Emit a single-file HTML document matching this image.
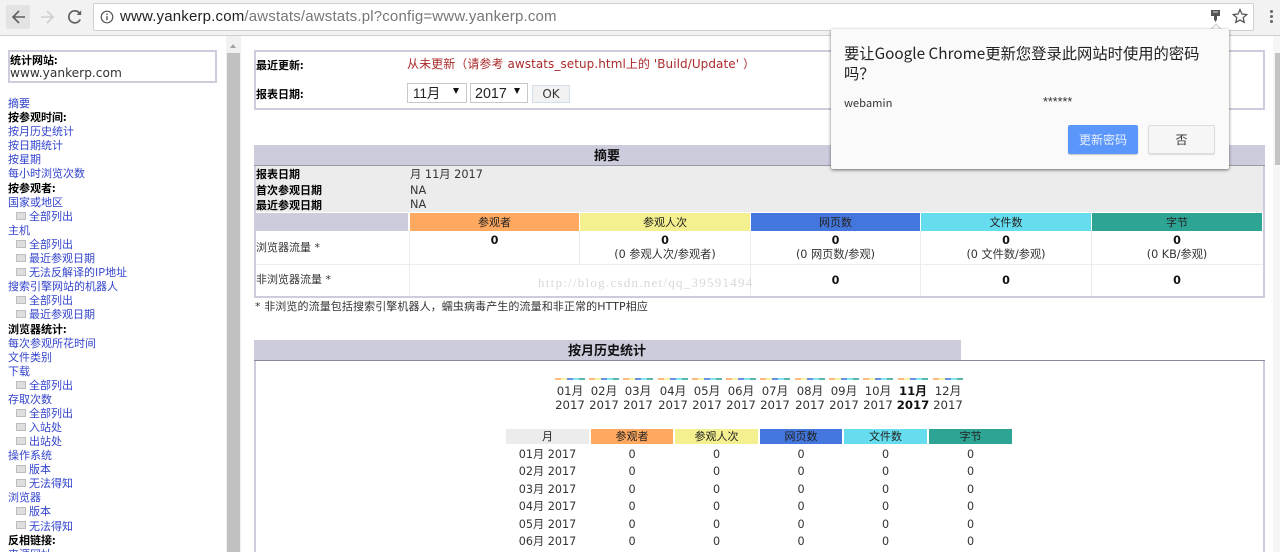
<!DOCTYPE html>
<html lang="zh"><head><meta charset="utf-8"><title>AWStats</title>
<style>
html,body{margin:0;padding:0;background:#fff;overflow:hidden}
#p{position:relative;width:1280px;height:552px;overflow:hidden;filter:blur(.35px);font:11px/14px "DejaVu Sans","Noto Sans CJK SC",sans-serif;color:#222}
#p div,#p a,#p b,#p svg{position:absolute;white-space:nowrap}
#p span{white-space:nowrap}
a{color:#3344cc;text-decoration:none}
.l{left:8px;font-family:"Noto Sans CJK SC",sans-serif;font-size:11px;line-height:14px}
.s{left:29px;font-family:"Noto Sans CJK SC",sans-serif;font-size:11px;line-height:14px}
.i{left:16px;width:8px;height:6px;background:#dedede;border:1px solid #bdbdbd}
.h{color:#000;font-weight:700;font-family:"Noto Sans CJK SC",sans-serif;font-size:11px;line-height:14px}
.c{text-align:center;font-family:"DejaVu Sans","Noto Sans CJK SC",sans-serif;font-size:11.2px;line-height:14px;color:#333}
.t{font-family:"Noto Sans CJK SC",sans-serif;font-size:11px;line-height:16px;text-align:center;color:#222}
.m{width:40px;text-align:center;font-size:11.7px;line-height:14.4px;color:#333}
.b{width:30px;height:2px;top:378px;opacity:.8;background:linear-gradient(90deg,#ffa860 0 20%,#f4f090 20% 40%,#4477dd 40% 60%,#66ddee 60% 80%,#2ea495 80%)}
</style></head><body><div id="p">

<!-- content frame: sidebar -->
<div style="left:8px;top:50px;width:205px;height:29px;border:2px solid #ccd"></div>
<div class="h" style="left:10px;top:53px">统计网站:</div>
<div style="left:10px;top:66px;font-size:12.2px;color:#333">www.yankerp.com</div>

<a class="l" style="top:96px">摘要</a>
<div class="h" style="left:8px;top:110px">按参观时间:</div>
<a class="l" style="top:124px">按月历史统计</a>
<a class="l" style="top:138px">按日期统计</a>
<a class="l" style="top:152px">按星期</a>
<a class="l" style="top:166px">每小时浏览次数</a>
<div class="h" style="left:8px;top:181px">按参观者:</div>
<a class="l" style="top:195px">国家或地区</a>
<div class="i" style="top:212px"></div><a class="s" style="top:209px">全部列出</a>
<a class="l" style="top:223px">主机</a>
<div class="i" style="top:240px"></div><a class="s" style="top:237px">全部列出</a>
<div class="i" style="top:254px"></div><a class="s" style="top:251px">最近参观日期</a>
<div class="i" style="top:268px"></div><a class="s" style="top:265px">无法反解译的IP地址</a>
<a class="l" style="top:279px">搜索引擎网站的机器人</a>
<div class="i" style="top:296px"></div><a class="s" style="top:293px">全部列出</a>
<div class="i" style="top:310px"></div><a class="s" style="top:307px">最近参观日期</a>
<div class="h" style="left:8px;top:322px">浏览器统计:</div>
<a class="l" style="top:336px">每次参观所花时间</a>
<a class="l" style="top:350px">文件类别</a>
<a class="l" style="top:364px">下载</a>
<div class="i" style="top:381px"></div><a class="s" style="top:378px">全部列出</a>
<a class="l" style="top:392px">存取次数</a>
<div class="i" style="top:409px"></div><a class="s" style="top:406px">全部列出</a>
<div class="i" style="top:423px"></div><a class="s" style="top:420px">入站处</a>
<div class="i" style="top:437px"></div><a class="s" style="top:434px">出站处</a>
<a class="l" style="top:448px">操作系统</a>
<div class="i" style="top:465px"></div><a class="s" style="top:462px">版本</a>
<div class="i" style="top:479px"></div><a class="s" style="top:476px">无法得知</a>
<a class="l" style="top:490px">浏览器</a>
<div class="i" style="top:507px"></div><a class="s" style="top:504px">版本</a>
<div class="i" style="top:521px"></div><a class="s" style="top:519px">无法得知</a>
<div class="h" style="left:8px;top:533px">反相链接:</div>
<a class="l" style="top:547px">来源网址</a>

<!-- sidebar scrollbar -->
<div style="left:226px;top:36px;width:15px;height:516px;background:#f1f1f1"></div>
<div style="left:227px;top:53px;width:13px;height:499px;background:#c1c1c1"></div>
<div style="left:230px;top:44px;width:0;height:0;border-left:3.5px solid transparent;border-right:3.5px solid transparent;border-bottom:4px solid #a3a3a3"></div>

<!-- top box -->
<div style="left:254px;top:50px;width:1007px;height:56px;border:2px solid #ccd"></div>
<div class="h" style="left:256px;top:58px">最近更新:</div>
<div class="h" style="left:256px;top:87px">报表日期:</div>
<div style="left:407px;top:57px;color:#aa2a2a;font-size:12px;letter-spacing:.07px">从未更新（请参考 awstats_setup.html上的 'Build/Update' ）</div>
<div style="left:407px;top:83px;width:58px;height:18px;border:1px solid #c8c8c8;background:#fff"></div>
<div style="left:413px;top:87px;font-size:13.4px;color:#222;font-family:'Liberation Sans','Noto Sans CJK SC',sans-serif">11月</div>
<div style="left:453px;top:88px;width:0;height:0;border-left:3.5px solid transparent;border-right:3.5px solid transparent;border-top:6px solid #111"></div>
<div style="left:470px;top:83px;width:56px;height:18px;border:1px solid #c8c8c8;background:#fff"></div>
<div style="left:475px;top:87px;font-size:14.3px;color:#222;font-family:'Liberation Sans','Noto Sans CJK SC',sans-serif">2017</div>
<div style="left:514px;top:88px;width:0;height:0;border-left:3.5px solid transparent;border-right:3.5px solid transparent;border-top:6px solid #111"></div>
<div style="left:532px;top:85px;width:36px;height:16px;border:1px solid #d4deea;background:#f2f2f2;text-align:center;line-height:16px;font-size:12px;color:#333;font-family:'DejaVu Sans',sans-serif">OK</div>

<!-- summary -->
<div style="left:254px;top:145px;width:1011px;height:20px;background:#ccd"></div>
<div style="left:254px;top:165px;width:1011px;height:1px;background:#9a9aa6"></div>
<div style="left:577px;top:147px;width:60px;text-align:center;font:700 13px/16px 'Noto Sans CJK SC',sans-serif;color:#111">摘要</div>
<div style="left:254px;top:166px;width:1007px;height:130px;border:2px solid #ccd;border-top:0;background:#fff"></div>
<div style="left:256px;top:166px;width:1007px;height:46px;background:#ececec"></div>
<div class="h" style="left:256px;top:167px">报表日期</div>
<div class="h" style="left:256px;top:183px">首次参观日期</div>
<div class="h" style="left:256px;top:198px">最近参观日期</div>
<div style="left:410px;top:168px;color:#333;font-size:11.3px">月 11月 2017</div>
<div style="left:410px;top:184px;color:#333;font-size:11.3px">NA</div>
<div style="left:410px;top:198px;color:#333;font-size:11.3px">NA</div>

<div style="left:256px;top:213px;width:152px;height:18px;background:#ccd"></div>
<div class="t" style="left:410px;top:213px;width:169px;height:18px;background:#ffa860;line-height:18px">参观者</div>
<div class="t" style="left:580px;top:213px;width:170px;height:18px;background:#f4f090;line-height:18px">参观人次</div>
<div class="t" style="left:751px;top:213px;width:169px;height:18px;background:#4477dd;line-height:18px">网页数</div>
<div class="t" style="left:921px;top:213px;width:170px;height:18px;background:#66ddee;line-height:18px">文件数</div>
<div class="t" style="left:1092px;top:213px;width:170px;height:18px;background:#2ea495;line-height:18px">字节</div>

<div style="left:256px;top:264px;width:1007px;height:1px;background:#ececec"></div>
<div style="left:409px;top:231px;width:1px;height:65px;background:#ececec"></div>
<div style="left:579px;top:231px;width:1px;height:33px;background:#ececec"></div>
<div style="left:750px;top:231px;width:1px;height:65px;background:#ececec"></div>
<div style="left:920px;top:231px;width:1px;height:65px;background:#ececec"></div>
<div style="left:1091px;top:231px;width:1px;height:65px;background:#ececec"></div>
<div style="left:256px;top:241px;font:11px/14px 'DejaVu Sans','Noto Sans CJK SC',sans-serif;color:#333">浏览器流量 *</div>
<div style="left:256px;top:273px;font:11px/14px 'DejaVu Sans','Noto Sans CJK SC',sans-serif;color:#333">非浏览器流量 *</div>

<div class="c" style="left:410px;width:169px;top:234px;font-weight:700;color:#111">0</div>
<div class="c" style="left:580px;width:170px;top:234px;font-weight:700;color:#111">0</div>
<div class="c" style="left:751px;width:169px;top:234px;font-weight:700;color:#111">0</div>
<div class="c" style="left:921px;width:170px;top:234px;font-weight:700;color:#111">0</div>
<div class="c" style="left:1092px;width:170px;top:234px;font-weight:700;color:#111">0</div>
<div class="c" style="left:580px;width:170px;top:248px">(0 参观人次/参观者)</div>
<div class="c" style="left:751px;width:169px;top:248px">(0 网页数/参观)</div>
<div class="c" style="left:921px;width:170px;top:248px">(0 文件数/参观)</div>
<div class="c" style="left:1092px;width:170px;top:248px">(0 KB/参观)</div>
<div class="c" style="left:751px;width:169px;top:274px;font-weight:700;color:#111">0</div>
<div class="c" style="left:921px;width:170px;top:274px;font-weight:700;color:#111">0</div>
<div class="c" style="left:1092px;width:170px;top:274px;font-weight:700;color:#111">0</div>
<div style="left:538px;top:276px;font:13px/14px 'Liberation Serif',serif;letter-spacing:1.25px;color:#d8d8d8">http://blog.csdn.net/qq_39591494</div>
<div style="left:255px;top:300px;font:11px/14px 'DejaVu Sans','Noto Sans CJK SC',sans-serif;letter-spacing:.1px;color:#333">* 非浏览的流量包括搜索引擎机器人，蠕虫病毒产生的流量和非正常的HTTP相应</div>

<!-- monthly -->
<div style="left:254px;top:340px;width:707px;height:20px;background:#ccd"></div>
<div style="left:254px;top:360px;width:1011px;height:1px;background:#88889a"></div>
<div style="left:547px;top:342px;width:120px;text-align:center;font:700 13px/16px 'Noto Sans CJK SC',sans-serif;color:#111">按月历史统计</div>
<div style="left:254px;top:361px;width:2px;height:191px;background:#ccd"></div>
<div style="left:1263px;top:361px;width:2px;height:191px;background:#ccd"></div>

<div class="b" style="left:555px"></div><div class="b" style="left:589px"></div><div class="b" style="left:623px"></div><div class="b" style="left:658px"></div><div class="b" style="left:692px"></div><div class="b" style="left:726px"></div><div class="b" style="left:760px"></div><div class="b" style="left:795px"></div><div class="b" style="left:829px"></div><div class="b" style="left:863px"></div><div class="b" style="left:898px"></div><div class="b" style="left:933px"></div>

<div class="m" style="left:550px;top:384px">01月<br>2017</div>
<div class="m" style="left:584px;top:384px">02月<br>2017</div>
<div class="m" style="left:618px;top:384px">03月<br>2017</div>
<div class="m" style="left:653px;top:384px">04月<br>2017</div>
<div class="m" style="left:687px;top:384px">05月<br>2017</div>
<div class="m" style="left:721px;top:384px">06月<br>2017</div>
<div class="m" style="left:755px;top:384px">07月<br>2017</div>
<div class="m" style="left:790px;top:384px">08月<br>2017</div>
<div class="m" style="left:824px;top:384px">09月<br>2017</div>
<div class="m" style="left:858px;top:384px">10月<br>2017</div>
<div class="m" style="left:893px;top:384px;font-weight:700;color:#111">11月<br>2017</div>
<div class="m" style="left:928px;top:384px">12月<br>2017</div>

<div class="t" style="left:506px;top:429px;width:83px;height:15px;line-height:15px;background:#ececec">月</div>
<div class="t" style="left:591px;top:429px;width:82px;height:15px;line-height:15px;background:#ffa860">参观者</div>
<div class="t" style="left:675px;top:429px;width:83px;height:15px;line-height:15px;background:#f4f090">参观人次</div>
<div class="t" style="left:760px;top:429px;width:82px;height:15px;line-height:15px;background:#4477dd">网页数</div>
<div class="t" style="left:844px;top:429px;width:83px;height:15px;line-height:15px;background:#66ddee">文件数</div>
<div class="t" style="left:929px;top:429px;width:83px;height:15px;line-height:15px;background:#2ea495">字节</div>

<div class="c" style="left:506px;width:83px;top:448px">01月 2017</div>
<div class="c" style="left:591px;width:82px;top:448px">0</div><div class="c" style="left:675px;width:83px;top:448px">0</div><div class="c" style="left:760px;width:82px;top:448px">0</div><div class="c" style="left:844px;width:83px;top:448px">0</div><div class="c" style="left:929px;width:83px;top:448px">0</div>
<div class="c" style="left:506px;width:83px;top:465px">02月 2017</div>
<div class="c" style="left:591px;width:82px;top:465px">0</div><div class="c" style="left:675px;width:83px;top:465px">0</div><div class="c" style="left:760px;width:82px;top:465px">0</div><div class="c" style="left:844px;width:83px;top:465px">0</div><div class="c" style="left:929px;width:83px;top:465px">0</div>
<div class="c" style="left:506px;width:83px;top:483px">03月 2017</div>
<div class="c" style="left:591px;width:82px;top:483px">0</div><div class="c" style="left:675px;width:83px;top:483px">0</div><div class="c" style="left:760px;width:82px;top:483px">0</div><div class="c" style="left:844px;width:83px;top:483px">0</div><div class="c" style="left:929px;width:83px;top:483px">0</div>
<div class="c" style="left:506px;width:83px;top:500px">04月 2017</div>
<div class="c" style="left:591px;width:82px;top:500px">0</div><div class="c" style="left:675px;width:83px;top:500px">0</div><div class="c" style="left:760px;width:82px;top:500px">0</div><div class="c" style="left:844px;width:83px;top:500px">0</div><div class="c" style="left:929px;width:83px;top:500px">0</div>
<div class="c" style="left:506px;width:83px;top:518px">05月 2017</div>
<div class="c" style="left:591px;width:82px;top:518px">0</div><div class="c" style="left:675px;width:83px;top:518px">0</div><div class="c" style="left:760px;width:82px;top:518px">0</div><div class="c" style="left:844px;width:83px;top:518px">0</div><div class="c" style="left:929px;width:83px;top:518px">0</div>
<div class="c" style="left:506px;width:83px;top:535px">06月 2017</div>
<div class="c" style="left:591px;width:82px;top:535px">0</div><div class="c" style="left:675px;width:83px;top:535px">0</div><div class="c" style="left:760px;width:82px;top:535px">0</div><div class="c" style="left:844px;width:83px;top:535px">0</div><div class="c" style="left:929px;width:83px;top:535px">0</div>

<!-- main scrollbar -->
<div style="left:1273px;top:36px;width:7px;height:516px;background:#f6f6f6"></div>
<div style="left:1275px;top:53px;width:5px;height:112px;background:#c4c4c4"></div>

<!-- browser chrome -->
<div style="left:0;top:0;width:1280px;height:35px;background:#f2f2f2;border-bottom:1px solid #cfcfcf"></div>
<div style="left:6px;top:5px;width:24px;height:24px;background:#e3e3e3;border-radius:2px"></div>
<svg style="left:10px;top:8px" width="18" height="18" viewBox="0 0 18 18" fill="none" stroke="#5f5f5f" stroke-width="1.6"><path d="M15 9H3M9 3L3 9l6 6"/></svg>
<svg style="left:38px;top:8px" width="18" height="18" viewBox="0 0 18 18" fill="none" stroke="#cfcfcf" stroke-width="1.6"><path d="M3 9h12M9 3l6 6-6 6"/></svg>
<svg style="left:66px;top:8px" width="18" height="18" viewBox="0 0 18 18" fill="none" stroke="#5f5f5f" stroke-width="1.7"><path d="M14.2 11.5A6 6 0 1 1 13.6 5.2"/><path d="M15.2 2.4v4.6h-4.6z" fill="#5f5f5f" stroke="none"/></svg>
<div style="left:93px;top:3px;width:1159px;height:26px;background:#fff;border:1px solid #d0d0d0;border-radius:2px"></div>
<svg style="left:100px;top:10px" width="14" height="14" viewBox="0 0 14 14" fill="none" stroke="#555" stroke-width="1.2"><circle cx="7" cy="7" r="5.8"/><path d="M7 6.2V10.2M7 3.6v1.4" stroke-width="1.4"/></svg>
<div style="left:120px;top:8px;font:15px/18px 'Liberation Sans',sans-serif;letter-spacing:.18px;color:#222">www.yankerp.com<span style="color:#777">/awstats/awstats.pl?config=www.yankerp.com</span></div>
<svg style="left:1209px;top:9px" width="13" height="15" viewBox="0 0 13 15"><path d="M2 1h9v6H8v3.5L6.5 13 5 10.5V7H2z" fill="#555"/><path d="M4 3h5" stroke="#ddd" stroke-width="1"/></svg>
<svg style="left:1232px;top:8px" width="16" height="16" viewBox="0 0 16 16" fill="none" stroke="#555" stroke-width="1.3"><path d="M8 1.6l2 4.4 4.7.5-3.5 3.2 1 4.7L8 12l-4.2 2.4 1-4.7L1.300 6.500 6 6z"/></svg>
<div style="left:1269.500px;top:10px;width:3px;height:3px;background:#666;border-radius:50%"></div>
<div style="left:1269.500px;top:15px;width:3px;height:3px;background:#666;border-radius:50%"></div>
<div style="left:1269.500px;top:20px;width:3px;height:3px;background:#666;border-radius:50%"></div>

<!-- dialog -->
<div style="left:1212px;top:25px;width:7px;height:7px;background:#fafafa;transform:rotate(45deg);border-top:1px solid #ccc;border-left:1px solid #ccc"></div>
<div style="left:831px;top:29px;width:398px;height:140px;background:#fafafa;border-radius:2px;box-shadow:0 1px 3px rgba(0,0,0,.55)"></div>
<div style="left:844px;top:43px;font:15.3px/20px 'Noto Sans CJK SC',sans-serif;color:#222">要让Google Chrome更新您登录此网站时使用的密码</div>
<div style="left:844px;top:63px;font:15.3px/20px 'Noto Sans CJK SC',sans-serif;color:#222">吗？</div>
<div style="left:844px;top:96px;font:11.2px/14px 'Noto Sans CJK SC',sans-serif;color:#333">webamin</div>
<div style="left:1043px;top:95px;font:12.5px/14px 'Liberation Sans',sans-serif;color:#333">******</div>
<div style="left:1068px;top:125px;width:70px;height:29px;background:#5b97fb;border-radius:2px;box-shadow:0 1px 1px rgba(0,0,0,.2);color:#e8f0ff;text-align:center;font:12px/29px 'Noto Sans CJK SC',sans-serif">更新密码</div>
<div style="left:1148px;top:125px;width:65px;height:27px;background:#f6f6f6;border:1px solid #dcdcdc;border-radius:2px;box-shadow:0 1px 1px rgba(0,0,0,.12);color:#333;text-align:center;font:12px/27px 'Noto Sans CJK SC',sans-serif">否</div>

</div></body></html>
